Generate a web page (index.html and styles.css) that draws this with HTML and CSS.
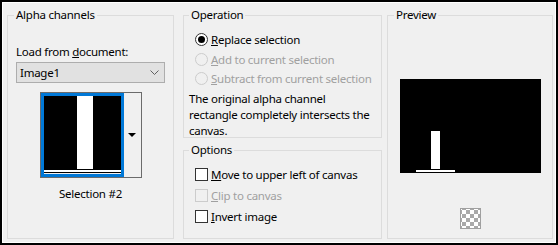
FILE: index.html
```html
<!DOCTYPE html>
<html lang="en">
<head>
    <meta charset="UTF-8">
    <title>Load Selection From Alpha Channel</title>
    <link rel="stylesheet" href="styles.css">
</head>
<body>

<div class="dialog">
    <fieldset class="group alpha">
        <legend>Alpha channels</legend>
        <div class="field-label">Load from <u>d</u>ocument:</div>
        <div class="combo">
            <span>Image1</span>
            <svg class="chevron" width="9" height="5" viewBox="0 0 9 5"><path d="M0.5 0.5 L4.5 4.5 L8.5 0.5" fill="none" stroke="#606060" stroke-width="1"/></svg>
        </div>
        <div class="thumb">
            <div class="thumb-image">
                <svg width="77" height="77" viewBox="0 0 77 77">
                    <rect width="77" height="77" fill="#000"/>
                    <rect x="33" y="0" width="16" height="73" fill="#fff"/>
                    <rect x="0" y="74" width="77" height="2" fill="#fff"/>
                </svg>
            </div>
            <div class="thumb-drop"><span class="arrow"></span></div>
        </div>
        <div class="caption">Selection #2</div>
    </fieldset>

    <div class="middle">
        <fieldset class="group operation">
            <legend>Operation</legend>
            <div class="choice">
                <span class="radio checked"></span>
                <span><u>R</u>eplace selection</span>
            </div>
            <div class="choice disabled">
                <span class="radio"></span>
                <span><u>A</u>dd to current selection</span>
            </div>
            <div class="choice disabled">
                <span class="radio"></span>
                <span><u>S</u>ubtract from current selection</span>
            </div>
            <p class="note">The original alpha channel<br>rectangle completely intersects the<br>canvas.</p>
        </fieldset>

        <fieldset class="group options">
            <legend>Options</legend>
            <div class="choice check-row">
                <span class="checkbox"></span>
                <span><u>M</u>ove to upper left of canvas</span>
            </div>
            <div class="choice check-row disabled">
                <span class="checkbox"></span>
                <span><u>C</u>lip to canvas</span>
            </div>
            <div class="choice check-row">
                <span class="checkbox"></span>
                <span><u>I</u>nvert image</span>
            </div>
        </fieldset>
    </div>

    <fieldset class="group preview">
        <legend>Preview</legend>
        <div class="preview-image">
            <svg width="141" height="94" viewBox="0 0 141 94">
                <rect width="141" height="94" fill="#000"/>
                <rect x="31" y="52" width="9" height="38" fill="#fff"/>
                <rect x="16" y="91" width="39" height="2" fill="#fff"/>
            </svg>
        </div>
        <div class="transparency"></div>
    </fieldset>
</div>

</body>
</html>
```

FILE: styles.css
```css
body {
    margin: 0;
    font-family: 'Noto Sans', sans-serif;
    font-size: 11.5px;
    letter-spacing: -0.25px;
    color: #000;
    background: #f0f0f0;
}
.dialog {
    width: 558px;
    height: 245px;
    box-sizing: border-box;
    border: 2px solid #000;
    box-shadow: inset 0 0 0 1px #fff;
    background-color: #f0f0f0;
    padding: 5px 0 0 5px;
    display: flex;
    align-items: flex-start;
    white-space: nowrap;
}
.group {
    margin: 0;
    padding: 0 8px;
    border: 1px solid #dcdcdc;
    box-sizing: border-box;
    min-width: 0;
}
.group legend {
    padding: 0 2px;
    line-height: 16px;
}
.alpha {
    width: 167px;
    height: 232px;
    display: flex;
    flex-direction: column;
}
.alpha legend {
    margin-left: -2px;
}
.field-label {
    margin-top: 21px;
    line-height: 16px;
}
.combo {
    margin-top: 2px;
    height: 21px;
    box-sizing: border-box;
    border: 1px solid #adadad;
    background-color: #e1e1e1;
    display: flex;
    align-items: center;
    justify-content: space-between;
    padding: 0 5px 0 3px;
}
.thumb {
    margin: 9px auto 0 auto;
    width: 102px;
    height: 86px;
    box-sizing: border-box;
    border: 1px solid #6b6b6b;
    display: flex;
}
.thumb-image {
    width: 83px;
    box-sizing: border-box;
    border: 3px solid #0078d7;
    line-height: 0;
}
.thumb-drop {
    flex: 1;
    display: flex;
    align-items: center;
    justify-content: center;
    background-color: #f0f0f0;
}
.arrow {
    width: 0;
    height: 0;
    border-left: 4px solid transparent;
    border-right: 4px solid transparent;
    border-top: 4px solid #000;
}
.caption {
    margin-top: 8px;
    line-height: 16px;
    text-align: center;
}
.middle {
    margin-left: 9px;
    width: 199px;
    display: flex;
    flex-direction: column;
    gap: 4px;
}
.operation {
    height: 131px;
    padding: 0 5px;
}
.options {
    height: 97px;
    padding: 0 5px;
}
.choice {
    display: flex;
    align-items: center;
    gap: 3px;
    height: 19.5px;
    margin-left: 6px;
}
.operation .choice:first-of-type {
    margin-top: 7px;
}
.check-row {
    height: 21px;
}
.options .choice:first-of-type {
    margin-top: 6px;
}
.disabled {
    color: #a0a0a0;
}
.radio {
    width: 13px;
    height: 13px;
    box-sizing: border-box;
    border-radius: 50%;
    border: 1px solid #333;
    background-color: #fff;
    position: relative;
}
.radio.checked::after {
    content: '';
    position: absolute;
    left: 2px;
    top: 2px;
    width: 7px;
    height: 7px;
    border-radius: 50%;
    background-color: #000;
}
.disabled .radio {
    border-color: #cccccc;
    background-color: #f0f0f0;
}
.checkbox {
    width: 13px;
    height: 13px;
    box-sizing: border-box;
    border: 1px solid #333;
    background-color: #fff;
}
.disabled .checkbox {
    border-color: #cccccc;
    background-color: #f0f0f0;
}
.note {
    margin: 2px 0 0 0;
    line-height: 16px;
}
.preview {
    margin-left: 5px;
    width: 166px;
    height: 232px;
    padding: 0 6px;
    display: flex;
    flex-direction: column;
    align-items: center;
}
.preview legend {
    margin-left: 0;
}
.preview-image {
    margin-top: 56px;
    line-height: 0;
}
.transparency {
    margin-top: 35px;
    width: 21px;
    height: 21px;
    box-sizing: border-box;
    border: 1px solid #a0a0a0;
    background-color: #fff;
    background-image: conic-gradient(#a9a9a9 25%, #fff 0 50%, #a9a9a9 0 75%, #fff 0);
    background-size: 8px 8px;
    background-position: 1px 1px;
}
```
